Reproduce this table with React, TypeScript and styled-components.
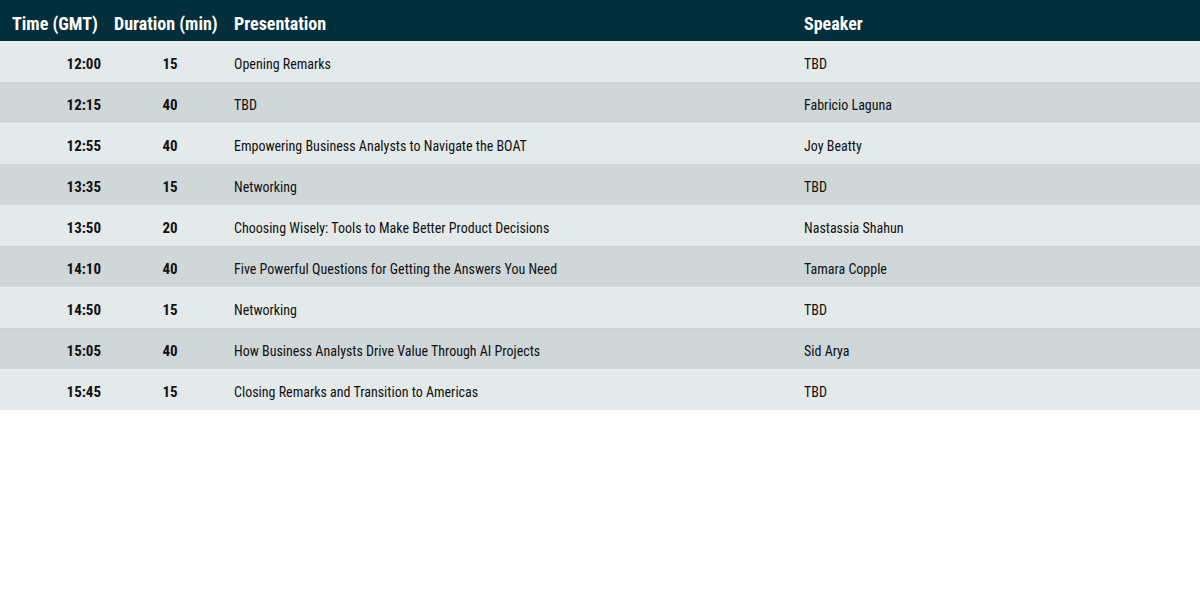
import styled, { createGlobalStyle } from 'styled-components';

const Global = createGlobalStyle`
  body {
    margin: 0;
    background: #fff;
    font-family: "Roboto Condensed", Roboto, sans-serif;
  }
`;

type Session = {
  time: string;
  duration: number;
  title: string;
  speaker: string;
};

const sessions: Session[] = [
  { time: '12:00', duration: 15, title: 'Opening Remarks', speaker: 'TBD' },
  { time: '12:15', duration: 40, title: 'TBD', speaker: 'Fabricio Laguna' },
  { time: '12:55', duration: 40, title: 'Empowering Business Analysts to Navigate the BOAT', speaker: 'Joy Beatty' },
  { time: '13:35', duration: 15, title: 'Networking', speaker: 'TBD' },
  { time: '13:50', duration: 20, title: 'Choosing Wisely: Tools to Make Better Product Decisions', speaker: 'Nastassia Shahun' },
  { time: '14:10', duration: 40, title: 'Five Powerful Questions for Getting the Answers You Need', speaker: 'Tamara Copple' },
  { time: '14:50', duration: 15, title: 'Networking', speaker: 'TBD' },
  { time: '15:05', duration: 40, title: 'How Business Analysts Drive Value Through AI Projects', speaker: 'Sid Arya' },
  { time: '15:45', duration: 15, title: 'Closing Remarks and Transition to Americas', speaker: 'TBD' },
];

const Schedule = styled.div`
  width: 1200px;
`;

const columns = '102px 120px 570px 1fr';

const HeaderRow = styled.div`
  display: grid;
  grid-template-columns: ${columns};
  height: 41px;
  box-sizing: border-box;
  padding-top: 5px;
  align-items: center;
  background: #032f3d;
  color: #fff;
  font-size: 18px;
  font-weight: 700;
`;

const HeaderCell = styled.div`
  padding-left: 12px;
  white-space: nowrap;
`;

const Row = styled.div<{ $shade: boolean }>`
  display: grid;
  grid-template-columns: ${columns};
  height: 41px;
  box-sizing: border-box;
  align-items: center;
  background: ${({ $shade }) => ($shade ? '#cfd7d9' : '#e4eaea')};
  border-top: 1px solid ${({ $shade }) => ($shade ? '#cbd3d5' : '#eaf0f0')};
  color: #111;
  font-size: 14px;
  padding-top: 4px;
`;

const TimeCell = styled.div`
  text-align: right;
  padding-right: 1px;
  font-size: 15px;
  font-weight: 700;
`;

const DurationCell = styled.div`
  text-align: center;
  padding: 0 12px 0 28px;
  font-size: 15px;
  font-weight: 700;
`;

const TextCell = styled.div`
  padding-left: 12px;
  white-space: nowrap;
`;

export default function App() {
  return (
    <>
      <Global />
      <Schedule>
        <HeaderRow>
          <HeaderCell>Time (GMT)</HeaderCell>
          <HeaderCell>Duration (min)</HeaderCell>
          <HeaderCell>Presentation</HeaderCell>
          <HeaderCell>Speaker</HeaderCell>
        </HeaderRow>
        {sessions.map((s, i) => (
          <Row key={s.time} $shade={i % 2 === 1}>
            <TimeCell>{s.time}</TimeCell>
            <DurationCell>{s.duration}</DurationCell>
            <TextCell>{s.title}</TextCell>
            <TextCell>{s.speaker}</TextCell>
          </Row>
        ))}
      </Schedule>
    </>
  );
}
